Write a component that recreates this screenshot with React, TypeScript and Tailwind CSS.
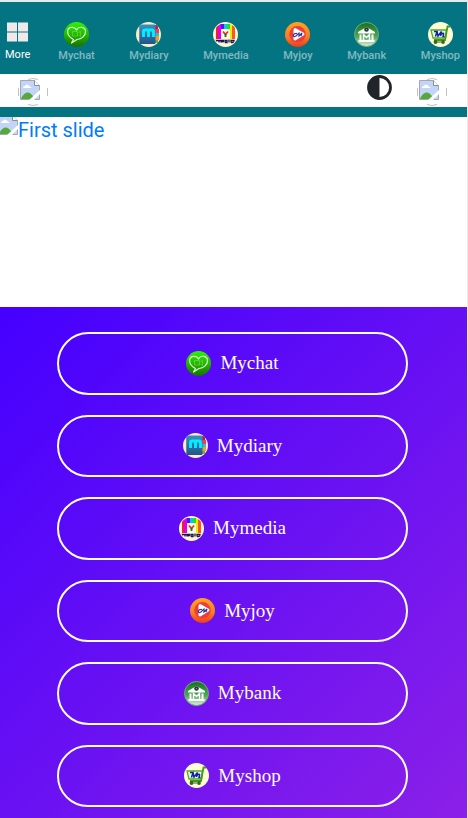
import React from "react";

const badge = "h-[25px] w-[25px] shrink-0";

function ChatIcon() {
  return (
    <svg viewBox="0 0 25 25" className={badge} aria-hidden="true">
      <defs>
        <linearGradient id="chat" x1="0" y1="0" x2="0" y2="1">
          <stop offset="0" stopColor="#2df500" />
          <stop offset="0.5" stopColor="#24b800" />
          <stop offset="1" stopColor="#177000" />
        </linearGradient>
      </defs>
      <circle cx="12.5" cy="12.5" r="12.5" fill="url(#chat)" />
      <path
        d="M7.500 21l2-3.500C5.500 15.500 3.600 12.500 3.600 9.800c0-5.200 6.800-6 8.900-1.800 2.200-4.300 9-3.300 9 1.800 0 4.500-4.200 7.200-8.500 7.700z"
        fill="none"
        stroke="#d9fbd0"
        strokeWidth="1.200"
        strokeLinejoin="round"
      />
      <path d="M8.500 9.500h5v4.500h-5zM14.500 10.500l2-1v5l-2-1.500" fill="none" stroke="#9be58c" strokeOpacity="0.600" strokeWidth="0.700" />
    </svg>
  );
}

function DiaryIcon() {
  return (
    <svg viewBox="0 0 25 25" className={badge} aria-hidden="true">
      <defs>
        <clipPath id="diary-round">
          <circle cx="12.5" cy="12.5" r="12.5" />
        </clipPath>
        <linearGradient id="diary" x1="0" y1="0" x2="0" y2="1">
          <stop offset="0" stopColor="#3a90c0" />
          <stop offset="1" stopColor="#22548c" />
        </linearGradient>
      </defs>
      <g clipPath="url(#diary-round)">
        <rect width="25" height="25" fill="#fbedc4" />
        <path d="M18 3h4v4h-4z" fill="#b51f46" />
        <path d="M19 7h4v4h-4z" fill="#ef3d61" />
        <path d="M19 11h4v3h-4z" fill="#3cb7d0" />
        <path d="M19 14h4v4h-4z" fill="#ed9a3d" />
        <path d="M18 18h4v3h-4z" fill="#70ad45" />
        <rect x="3" y="2.500" width="16.500" height="19.500" rx="1" fill="url(#diary)" />
        <path d="M3.500 3v18" stroke="#7195aa" strokeWidth="0.800" />
        <path d="M7.500 15V9.500q0-1.500 1.500-1.500h7q1.500 0 1.500 1.500V15M12.500 8v7" fill="none" stroke="#00efff" strokeWidth="2.900" />
      </g>
    </svg>
  );
}

function MediaIcon() {
  return (
    <svg viewBox="0 0 25 25" className={badge} aria-hidden="true">
      <defs>
        <clipPath id="media-round">
          <circle cx="12.5" cy="12.5" r="11.5" />
        </clipPath>
      </defs>
      <circle cx="12.5" cy="12.5" r="12.5" fill="#fff5cf" />
      <g clipPath="url(#media-round)">
        <path d="M3 2h2v15H3z" fill="#ef202c" />
        <path d="M5 2h3v15H5z" fill="#df00eb" />
        <path d="M8 2h3v15H8z" fill="#4b16ff" />
        <path d="M11 2h3v15h-3z" fill="#00c8ff" />
        <path d="M14 2h3v15h-3z" fill="#18e51b" />
        <path d="M17 2h2v15h-2z" fill="#eaf000" />
        <path d="M19 2h3v15h-3z" fill="#ff5426" />
        <path d="M8 7h9v10H8z" fill="#fff9df" />
        <path d="M10 9.500l2.500 3 2.500-3" fill="none" stroke="#d43b32" strokeWidth="1.800" />
        <path d="M12.500 12v3" stroke="#18703c" strokeWidth="1.800" />
        <path d="M3 20.500v-2h3v2m0-2h2v2m1 0v-2h2m-2 1h2m1 1v-2h2v2h-2m4-3v3m2 0v-2h3v2h-3" fill="none" stroke="#17135c" strokeWidth="1.300" />
      </g>
    </svg>
  );
}

function JoyIcon() {
  return (
    <svg viewBox="0 0 25 25" className={badge} aria-hidden="true">
      <defs>
        <linearGradient id="joy" x1="0" y1="0" x2="0" y2="1">
          <stop offset="0" stopColor="#ffa320" />
          <stop offset="0.600" stopColor="#fa7d22" />
          <stop offset="1" stopColor="#ef3a20" />
        </linearGradient>
      </defs>
      <circle cx="12.5" cy="12.5" r="12.5" fill="url(#joy)" />
      <circle cx="12.5" cy="12.3" r="8.300" fill="#ee3e3b" />
      <path d="M10 7.500l8 4.500-8 5z" fill="#fff" stroke="#fff" strokeWidth="3" strokeLinejoin="round" />
      <path d="M12 11.500c-4-.5-5 3.500-2 3 2-.5 3-3 4-3.500v3l3-3-1 3" fill="none" stroke="#31339a" strokeWidth="1.200" />
    </svg>
  );
}

function BankIcon() {
  return (
    <svg viewBox="0 0 25 25" className={badge} aria-hidden="true">
      <defs>
        <linearGradient id="bank" x1="0" y1="0" x2="0" y2="1">
          <stop offset="0" stopColor="#15701c" />
          <stop offset="0.600" stopColor="#4fa956" />
          <stop offset="1" stopColor="#e2f2df" />
        </linearGradient>
      </defs>
      <circle cx="12.5" cy="12.5" r="12" fill="url(#bank)" stroke="#72a878" />
      <path d="M4 10l8.500-5 8.500 5v1.500H4zM5.500 12.500h2V18h-2zM17.500 12.500h2V18h-2zM4.500 18h16v2h-16z" fill="#fff" />
      <path d="M9.500 18v-5.500l3 3 3-3V18" fill="none" stroke="#fff" strokeWidth="1.500" />
      <circle cx="12.5" cy="7.500" r="2.300" fill="#26372f" />
      <circle cx="12.5" cy="7.500" r="0.700" fill="#8a9b90" />
    </svg>
  );
}

function ShopIcon() {
  return (
    <svg viewBox="0 0 25 25" className={badge} aria-hidden="true">
      <circle cx="12.5" cy="12.5" r="12.5" fill="#fffbd2" />
      <path d="M3 8h15.500l-1 8H5z" fill="#e5f5ef" stroke="#55ad20" strokeWidth="1.300" />
      <path d="M22 4.500h-2.500L17 18H6" fill="none" stroke="#409c18" strokeWidth="1.800" />
      <path d="M6 9.500h3l-1.500 5M9 9.500l1 4.500 3.500-4.500-1 4.500M13 12.500q3-2.500 2.500 0l-.5 2h1.500" fill="none" stroke="#11249c" strokeWidth="1.500" />
      <circle cx="7.500" cy="20" r="1.900" fill="#356720" />
      <circle cx="15" cy="20" r="1.900" fill="#356720" />
      <path d="M9 20h4" stroke="#356720" />
    </svg>
  );
}

function BrokenImage({ className = "" }: { className?: string }) {
  return (
    <svg viewBox="0 0 20 20" className={`h-5 w-5 shrink-0 ${className}`} aria-hidden="true">
      <path d="M.5.5h14l5 5v14H.5z" fill="#c3d5f7" stroke="#a3a8b0" />
      <path d="M3 8q0-2 2-2 1-2.500 3-1 1.500 0 1.500 1.500 2 0 2 1.500z" fill="#fff" />
      <path d="M1 19c2-5 6-8 9.500-5.500L16 19z" fill="#55a83a" />
      <path d="M9 20L20 10v4l-6 6z" fill="#fff" />
      <path d="M14.500.5v5h5" fill="#fff" stroke="#858e94" />
    </svg>
  );
}

function Avatar({ label }: { label: string }) {
  return (
    <button aria-label={label} className="relative flex h-[30px] w-[30px] items-center pl-0.5 pb-1">
      <BrokenImage />
      <svg viewBox="0 0 30 30" className="absolute inset-0" aria-hidden="true">
        <path d="M10 2.500q5-2 10 0M10 27.500q5 2 10 0M.5 11v8M29.500 11v8" fill="none" stroke="#c0c0c0" />
      </svg>
    </button>
  );
}

const apps = [
  { name: "Mychat", Icon: ChatIcon },
  { name: "Mydiary", Icon: DiaryIcon },
  { name: "Mymedia", Icon: MediaIcon },
  { name: "Myjoy", Icon: JoyIcon },
  { name: "Mybank", Icon: BankIcon },
  { name: "Myshop", Icon: ShopIcon },
];

export default function App() {
  return (
    <div className="min-h-screen border-t-2 border-r border-t-[#e3eaee] border-r-[#e8eaf0] bg-white font-[Roboto,sans-serif]">
      <header className="bg-[#047482]">
        <nav className="flex h-[72px] items-start gap-7 overflow-hidden pr-[7px] pl-[5px] pt-5 text-[11px] leading-4 font-medium">
          <button className="flex shrink-0 flex-col items-center gap-[5px] font-normal text-white">
            <svg viewBox="0 0 21 19" className="h-5 w-[21px]" aria-hidden="true">
              <path d="M0 0h10v9H0zM11 0h10v9H11zM0 10h10v9H0zM11 10h10v9H11z" fill="#f1e9e9" />
            </svg>
            More
          </button>
          <div className="flex flex-1 justify-between">
            {apps.map(({ name, Icon }) => (
              <a key={name} href={`#${name}`} className="flex shrink-0 flex-col items-center gap-px text-white/50">
                <Icon />
                {name}
              </a>
            ))}
          </div>
        </nav>
      </header>

      <div className="flex h-[33px] items-start bg-white pr-5 pl-[18px] pt-[3px]">
        <Avatar label="Profile" />
        <button aria-label="Toggle contrast" className="-mt-0.5 mr-[25px] ml-auto">
          <svg viewBox="0 0 25 25" className="h-[25px] w-[25px]" aria-hidden="true">
            <circle cx="12.5" cy="12.5" r="11" fill="#fff" stroke="#212529" strokeWidth="2.800" />
            <path d="M12.500 1.500a11 11 0 0 0 0 22z" fill="#212529" />
          </svg>
        </button>
        <Avatar label="Account" />
      </div>

      <div className="h-2.5 bg-[#047482]" />

      <a href="#slide" className="flex h-[190px] items-start overflow-hidden text-xl leading-[27px] text-[#007bff]">
        <BrokenImage className="-mt-0.5 -ml-0.5" />
        First slide
      </a>

      <main className="min-h-[511px] bg-linear-135/srgb from-[#4400ff] to-[#8b20e8] pt-[25px] pr-[59px] pb-[11px] pl-[57px]">
        <div className="grid min-h-[475px] auto-rows-fr gap-5">
          {apps.map(({ name, Icon }) => (
            <button
              key={name}
              className="flex items-center justify-center gap-[9px] rounded-full border-2 border-white font-['Liberation_Serif',serif] text-[19px] text-white"
            >
              <Icon />
              {name}
            </button>
          ))}
        </div>
      </main>
    </div>
  );
}
